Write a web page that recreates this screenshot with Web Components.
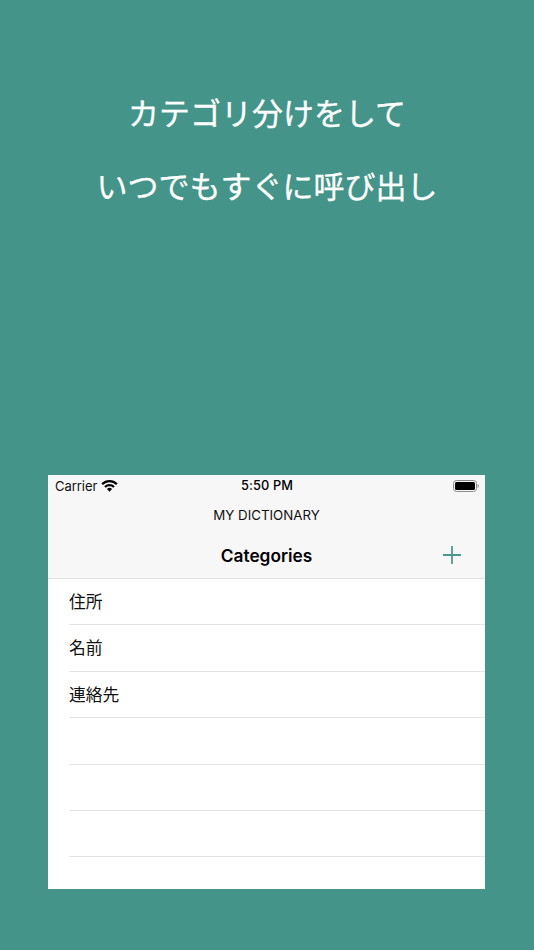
<!DOCTYPE html>
<html lang="ja"><head><meta charset="utf-8"><title>My Dictionary</title>
<style>html,body{margin:0;padding:0;background:#44948a}body{width:534px;height:950px;overflow:hidden}</style></head>
<body>
<promo-page>
  <promo-title slot="title">カテゴリ分けをして</promo-title>
  <promo-title slot="title">いつでもすぐに呼び出し</promo-title>
  <phone-screen slot="screen">
    <status-bar slot="status"></status-bar>
    <nav-bar slot="nav" app="MY DICTIONARY" heading="Categories"></nav-bar>
    <list-row>住所</list-row>
    <list-row>名前</list-row>
    <list-row>連絡先</list-row>
    <list-row></list-row>
    <list-row></list-row>
    <list-row></list-row>
  </phone-screen>
</promo-page>
<script>
function def(name, html, init){
  customElements.define(name, class extends HTMLElement{
    constructor(){super();this.attachShadow({mode:'open'}).innerHTML=html;}
    connectedCallback(){ if(init) init(this); }
  });
}
const SANS='"Noto Sans CJK JP","Noto Sans CJK SC",sans-serif';
def('promo-page',`<style>
:host{display:flex;flex-direction:column;width:534px;height:950px;box-sizing:border-box;background:#44948a;padding-top:75px;font-family:Inter,${SANS}}
.t{display:flex;flex-direction:column;align-items:center;height:400px}
.s{display:block;margin:0 48px}
</style><div class="t"><slot name="title"></slot></div><div class="s"><slot name="screen"></slot></div>`);
def('promo-title',`<style>
:host{display:block;height:73px;line-height:73px;font-size:31px;color:#fff;text-align:center;white-space:nowrap;font-family:${SANS};font-weight:400;-webkit-text-stroke:.3px #fff}
</style><slot></slot>`);
def('phone-screen',`<style>
:host{display:flex;flex-direction:column;width:437px;height:414px;background:#fff;overflow:hidden}
</style><slot name="status"></slot><slot name="nav"></slot><slot></slot>`);
def('status-bar',`<style>
:host{display:grid;grid-template-columns:1fr auto 1fr;align-items:center;height:22px;padding:0 6px 0 7px;background:#f7f7f7;color:#000;font:13px/22px Inter,Roboto,sans-serif}
.l{display:flex;align-items:center;gap:5px;letter-spacing:-.05px;color:#111}
.c{font-weight:500;font-size:12.800px;letter-spacing:.1px}
.r{display:flex;justify-content:flex-end;align-items:center}
svg{display:block}
.w{margin:-2px 0 0 -1px}
</style>
<div class="l"><span>Carrier</span>
<svg class="w" width="17" height="13" viewBox="0 0 16 12"><path d="M.3 3.900A11 11 0 0 1 15.700 3.900L14.200 5.500A8.900 8.900 0 0 0 1.800 5.500Z"/><path d="M3 6.700A7.200 7.200 0 0 1 13 6.700L11.500 8.200A5.100 5.100 0 0 0 4.500 8.200Z"/><path d="M5.600 9.300A3.500 3.500 0 0 1 10.400 9.300L8 11.800Z"/></svg></div>
<div class="c">5:50 PM</div>
<div class="r"><svg width="26" height="12" viewBox="0 0 26 12"><rect x=".5" y=".5" width="23" height="11" rx="3" fill="none" stroke="#8a8a8a"/><rect x="2" y="2" width="20" height="8" rx="1.500"/><path d="M24.600 4v4c.7-.2 1.200-1 1.200-2s-.5-1.800-1.200-2z" fill="#8a8a8a"/></svg></div>`);
def('nav-bar',`<style>
:host{display:block;height:82px;box-sizing:border-box;background:#f7f7f7;border-bottom:1px solid #e0e0e0;position:relative;text-align:center;color:#000}
.a{font:400 13.300px/20px Inter,Roboto,sans-serif;height:20px;padding-top:8px;color:#111}
.h{font:600 17.300px/24px Inter,Roboto,sans-serif;margin-top:19px}
svg{position:absolute;right:23px;top:48px}
</style><div class="a"></div><div class="h"></div>
<svg width="20" height="20" viewBox="0 0 20 20"><path d="M10 1V19M1 10H19" stroke="#4b9a90" stroke-width="1.800" fill="none"/></svg>`,
el=>{const s=el.shadowRoot;s.querySelector('.a').textContent=el.getAttribute('app');s.querySelector('.h').textContent=el.getAttribute('heading');});
def('list-row',`<style>
:host{display:block;flex:none;height:46.400px;box-sizing:border-box;padding-left:21px;font:400 16.800px/45px ${SANS};color:#111}
.i{height:100%;box-sizing:border-box;border-bottom:1px solid #e4e4e4;white-space:nowrap}
</style><div class="i"><slot></slot></div>`);
</script>
</body></html>
